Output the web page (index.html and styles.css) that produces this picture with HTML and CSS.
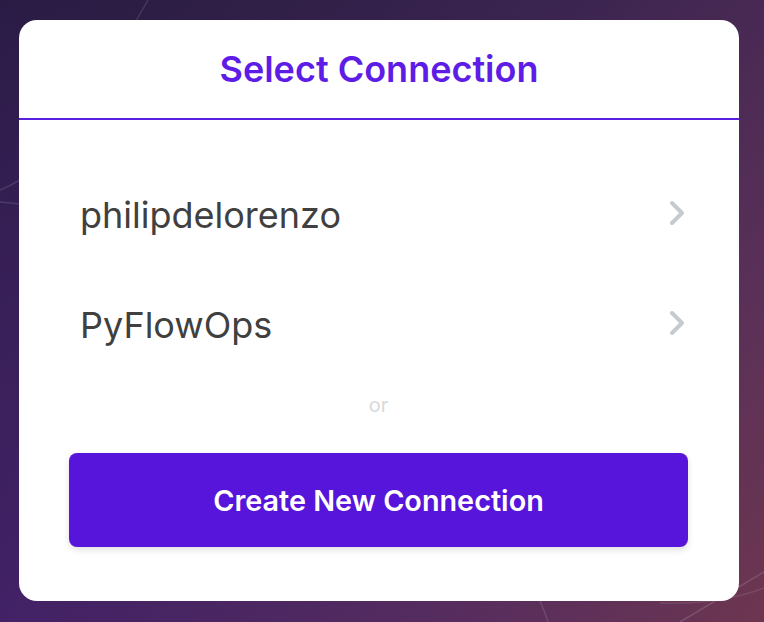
FILE: index.html
```html
<!DOCTYPE html>
<html>
<head>
<meta charset="utf-8">
<link rel="stylesheet" href="styles.css">
</head>
<body>
<svg class="bg-lines" width="764" height="622" viewBox="0 0 764 622">
  <path d="M148 0 L132 28" stroke="rgba(255,255,255,0.12)" stroke-width="1.5" fill="none"/>
  <path d="M0 190 Q10 186 20 180" stroke="rgba(255,255,255,0.12)" stroke-width="1.5" fill="none"/>
  <path d="M0 202 L20 204" stroke="rgba(255,255,255,0.12)" stroke-width="1.5" fill="none"/>
  <path d="M540 601 Q545 612 548 622" stroke="rgba(255,255,255,0.12)" stroke-width="1.5" fill="none"/>
  <path d="M680 622 L764 572" stroke="rgba(255,255,255,0.14)" stroke-width="1.5" fill="none"/>
  <path d="M660 603 Q720 605 764 588" stroke="rgba(255,255,255,0.1)" stroke-width="1.5" fill="none"/>
</svg>
<div class="card">
  <div class="card-header">
    <h1 class="title">Select Connection</h1>
  </div>
  <div class="card-body">
    <ul class="conn-list">
      <li class="conn-item">
        <span class="conn-name">philipdelorenzo</span>
        <svg class="chev" width="20" height="26" viewBox="0 0 20 26"><path d="M4 3 L14 13 L4 23" stroke="#c6cacd" stroke-width="4" fill="none" stroke-linecap="round" stroke-linejoin="round"/></svg>
      </li>
      <li class="conn-item">
        <span class="conn-name">PyFlowOps</span>
        <svg class="chev" width="20" height="26" viewBox="0 0 20 26"><path d="M4 3 L14 13 L4 23" stroke="#c6cacd" stroke-width="4" fill="none" stroke-linecap="round" stroke-linejoin="round"/></svg>
      </li>
    </ul>
    <div class="or">or</div>
    <button class="create-btn">Create New Connection</button>
  </div>
</div>
</body>
</html>
```
FILE: styles.css
```css
html, body {
  margin: 0;
  padding: 0;
}
body {
  width: 764px;
  height: 622px;
  overflow: hidden;
  position: relative;
  font-family: Inter, "Noto Sans", sans-serif;
  background:
    linear-gradient(135deg, #271b40 0%, #3a2450 40%, #5a3058 75%, #6d3650 100%);
  padding: 20px 0 0 19px;
  box-sizing: border-box;
}
body::before {
  content: "";
  position: absolute;
  inset: 0;
  background: linear-gradient(45deg, rgba(70,30,120,0.55) 0%, rgba(70,30,120,0) 55%);
}
.bg-lines {
  position: absolute;
  left: 0;
  top: 0;
}
.card {
  position: relative;
  width: 720px;
  height: 581px;
  background: #fff;
  border-radius: 18px;
  overflow: hidden;
  display: flex;
  flex-direction: column;
}
.card-header {
  height: 98px;
  border-bottom: 2px solid #5a1fe0;
  display: flex;
  align-items: center;
  justify-content: center;
}
.title {
  margin: 0;
  font-size: 36px;
  font-weight: 600;
  color: #5d1de6;
}
.card-body {
  padding: 40px 51px 0 50px;
  display: flex;
  flex-direction: column;
}
.conn-list {
  list-style: none;
  margin: 0;
  padding: 0;
}
.conn-item {
  height: 110px;
  display: flex;
  align-items: center;
  justify-content: space-between;
  padding: 0 0 0 11px;
}
.conn-name {
  font-size: 36px;
  color: #404040;
}
.chev {
  display: block;
  position: relative;
  top: -2px;
}
.or {
  height: 50px;
  line-height: 50px;
  text-align: center;
  font-size: 20px;
  color: #d9d9d9;
}
.create-btn {
  margin-top: 23px;
  height: 94px;
  border: none;
  border-radius: 8px;
  background: #5714db;
  color: #fff;
  font-family: Inter, "Noto Sans", sans-serif;
  font-size: 28.8px;
  font-weight: 600;
  box-shadow: 0 3px 6px rgba(0,0,0,0.12);
  padding: 0;
}
```
